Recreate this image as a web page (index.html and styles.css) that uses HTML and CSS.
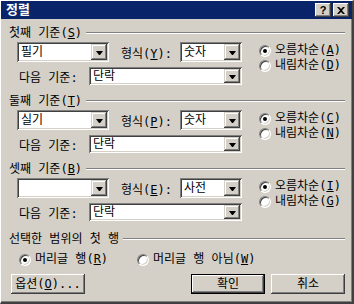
FILE: index.html
```html
<!DOCTYPE html>
<html lang="ko">
<head>
    <meta charset="UTF-8">
    <title>정렬</title>
    <link rel="stylesheet" href="styles.css">
</head>
<body>

<div class="dialog">
    <div class="titlebar">
        <span class="title">정렬</span>
        <div class="caption-buttons">
            <span class="caption-btn help">?</span>
            <span class="caption-btn close">
                <svg width="8" height="7" viewBox="0 0 8 7"><path d="M0 0h2l2 2 2-2h2L5 3.5 8 7H6L4 5 2 7H0l3-3.5z" fill="#000"/></svg>
            </span>
        </div>
    </div>

    <div class="content">
        <!-- first key -->
        <div class="group">
            <div class="group-head"><span>첫째 기준(<u>S</u>)</span><span class="rule"></span></div>
            <div class="group-body">
                <div class="fields">
                    <div class="row">
                        <div class="combo key"><span class="value">필기</span><span class="drop"></span></div>
                        <span class="type-label">형식(<u>Y</u>):</span>
                        <div class="combo type"><span class="value">숫자</span><span class="drop"></span></div>
                    </div>
                    <div class="row">
                        <span class="next-label">다음 기준:</span>
                        <div class="combo next"><span class="value">단락</span><span class="drop"></span></div>
                    </div>
                </div>
                <div class="radios">
                    <div class="radio checked"><span class="circle"></span><span>오름차순(<u>A</u>)</span></div>
                    <div class="radio"><span class="circle"></span><span>내림차순(<u>D</u>)</span></div>
                </div>
            </div>
        </div>

        <!-- second key -->
        <div class="group">
            <div class="group-head"><span>둘째 기준(<u>T</u>)</span><span class="rule"></span></div>
            <div class="group-body">
                <div class="fields">
                    <div class="row">
                        <div class="combo key"><span class="value">실기</span><span class="drop"></span></div>
                        <span class="type-label">형식(<u>P</u>):</span>
                        <div class="combo type"><span class="value">숫자</span><span class="drop"></span></div>
                    </div>
                    <div class="row">
                        <span class="next-label">다음 기준:</span>
                        <div class="combo next"><span class="value">단락</span><span class="drop"></span></div>
                    </div>
                </div>
                <div class="radios">
                    <div class="radio checked"><span class="circle"></span><span>오름차순(<u>C</u>)</span></div>
                    <div class="radio"><span class="circle"></span><span>내림차순(<u>N</u>)</span></div>
                </div>
            </div>
        </div>

        <!-- third key -->
        <div class="group">
            <div class="group-head"><span>셋째 기준(<u>B</u>)</span><span class="rule"></span></div>
            <div class="group-body">
                <div class="fields">
                    <div class="row">
                        <div class="combo key"><span class="value"></span><span class="drop"></span></div>
                        <span class="type-label">형식(<u>E</u>):</span>
                        <div class="combo type"><span class="value">사전</span><span class="drop"></span></div>
                    </div>
                    <div class="row">
                        <span class="next-label">다음 기준:</span>
                        <div class="combo next"><span class="value">단락</span><span class="drop"></span></div>
                    </div>
                </div>
                <div class="radios">
                    <div class="radio checked"><span class="circle"></span><span>오름차순(<u>I</u>)</span></div>
                    <div class="radio"><span class="circle"></span><span>내림차순(<u>G</u>)</span></div>
                </div>
            </div>
        </div>

        <!-- header row -->
        <div class="group header-group">
            <div class="group-head"><span>선택한 범위의 첫 행</span><span class="rule"></span></div>
            <div class="radio-line">
                <div class="radio checked"><span class="circle"></span><span>머리글 행(<u>R</u>)</span></div>
                <div class="radio"><span class="circle"></span><span>머리글 행 아님(<u>W</u>)</span></div>
            </div>
        </div>

        <div class="buttons">
            <button class="btn">옵션(<u>O</u>)...</button>
            <button class="btn default">확인</button>
            <button class="btn cancel">취소</button>
        </div>
    </div>
</div>

</body>
</html>
```

FILE: styles.css
```css
* {
    box-sizing: border-box;
}
body {
    margin: 0;
    background-color: #d4d0c8;
    /* mono latin gives the wide ascii of the old bitmap font, hangul falls back */
    font-family: "DejaVu Sans Mono", "Noto Sans CJK KR", sans-serif;
    font-size: 12px;
    color: #000;
}
u {
    text-decoration-thickness: 1px;
    text-underline-offset: 1px;
}
.dialog {
    width: 354px;
    height: 304px;
    background-color: #d4d0c8;
    border-left: 1px solid #fff;
    border-top: 1px solid #fff;
    border-right: 2px solid #404040;
    border-bottom: 2px solid #404040;
    box-shadow: inset -1px -1px #808080;
}

/* title bar */
.titlebar {
    height: 18px;
    background-color: #0a246a;
    display: flex;
    align-items: center;
    justify-content: space-between;
    padding: 0 3px 0 5px;
}
.title {
    color: #fff;
    font-weight: bold;
    font-size: 13px;
    line-height: 18px;
}
.caption-buttons {
    display: flex;
    gap: 2px;
}
.caption-btn {
    width: 16px;
    height: 14px;
    background-color: #d4d0c8;
    box-shadow: inset -1px -1px #404040, inset 1px 1px #fff, inset -2px -2px #808080;
    display: flex;
    align-items: center;
    justify-content: center;
}
.caption-btn.help {
    font-family: "Liberation Sans", sans-serif;
    font-weight: bold;
    font-size: 11px;
    line-height: 14px;
    padding-bottom: 1px;
}

/* groups */
.content {
    padding: 8px 7px 0 8px;
}
.group + .group {
    margin-top: 10px;
}
.group-head {
    display: flex;
    align-items: center;
    height: 12px;
    line-height: 12px;
    white-space: nowrap;
}
.rule {
    flex: 1;
    height: 2px;
    margin-left: 4px;
    border-top: 1px solid #808080;
    border-bottom: 1px solid #fff;
}
.group-body {
    display: flex;
    margin-top: 3px;
}
.fields {
    margin-left: 8px;
    width: 225px;
    display: flex;
    flex-direction: column;
    gap: 5px;
}
.row {
    display: flex;
    align-items: center;
}
.type-label {
    margin-left: 12px;
    white-space: nowrap;
}
.next-label {
    margin-left: 2px;
    white-space: nowrap;
}

/* combo boxes */
.combo {
    height: 20px;
    padding: 2px;
    display: flex;
    align-items: center;
    background-color: #fff;
    box-shadow: inset 1px 1px #808080, inset -1px -1px #fff, inset 2px 2px #404040, inset -2px -2px #d4d0c8;
}
.combo .value {
    flex: 1;
    padding-left: 2px;
    line-height: 16px;
}
.combo.key {
    width: 92px;
}
.combo.type {
    width: 62px;
    margin-left: auto;
}
.combo.next {
    width: 153px;
    height: 18px;
    margin-left: auto;
}
.drop {
    width: 16px;
    height: 16px;
    background-color: #d4d0c8;
    box-shadow: inset -1px -1px #404040, inset 1px 1px #d4d0c8, inset -2px -2px #808080, inset 2px 2px #fff;
    display: flex;
    align-items: center;
    justify-content: center;
}
.combo.next .drop {
    height: 14px;
}
.drop::after {
    content: "";
    width: 1px;
    height: 0;
    border-top: 4px solid #000;
    border-left: 3px solid transparent;
    border-right: 3px solid transparent;
    box-sizing: content-box;
    margin-top: 1px;
}

/* radio buttons */
.radios {
    margin-left: 17px;
    margin-top: 1px;
    display: flex;
    flex-direction: column;
}
.radio {
    display: flex;
    align-items: center;
    gap: 4px;
    height: 15px;
    line-height: 15px;
    white-space: nowrap;
}
.circle {
    width: 12px;
    height: 12px;
    border-radius: 50%;
    background-color: #fff;
    border: 1px solid;
    border-color: #808080 #fff #fff #808080;
    box-shadow: inset 1px 1px #404040, inset -1px -1px #d4d0c8;
    display: flex;
    align-items: center;
    justify-content: center;
    flex-shrink: 0;
}
.radio.checked .circle::after {
    content: "";
    width: 4px;
    height: 4px;
    border-radius: 50%;
    background-color: #000;
}

/* header row group */
.header-group {
    margin-top: 12px !important;
}
.radio-line {
    display: flex;
    margin-top: 7px;
    padding-left: 10px;
}
.radio-line .radio {
    width: 118px;
}

/* buttons */
.buttons {
    display: flex;
    margin-top: 7px;
    padding-left: 2px;
}
.btn {
    width: 74px;
    height: 20px;
    padding: 0;
    border: none;
    background-color: #d4d0c8;
    font: inherit;
    color: #000;
    line-height: 18px;
    box-shadow: inset -1px -1px #404040, inset 1px 1px #fff, inset -2px -2px #808080;
}
.btn.default {
    margin-left: auto;
    box-shadow: inset 0 0 0 1px #000, inset -2px -2px #404040, inset 2px 2px #fff, inset -3px -3px #808080;
}
.btn.cancel {
    margin-left: 6px;
}
```
